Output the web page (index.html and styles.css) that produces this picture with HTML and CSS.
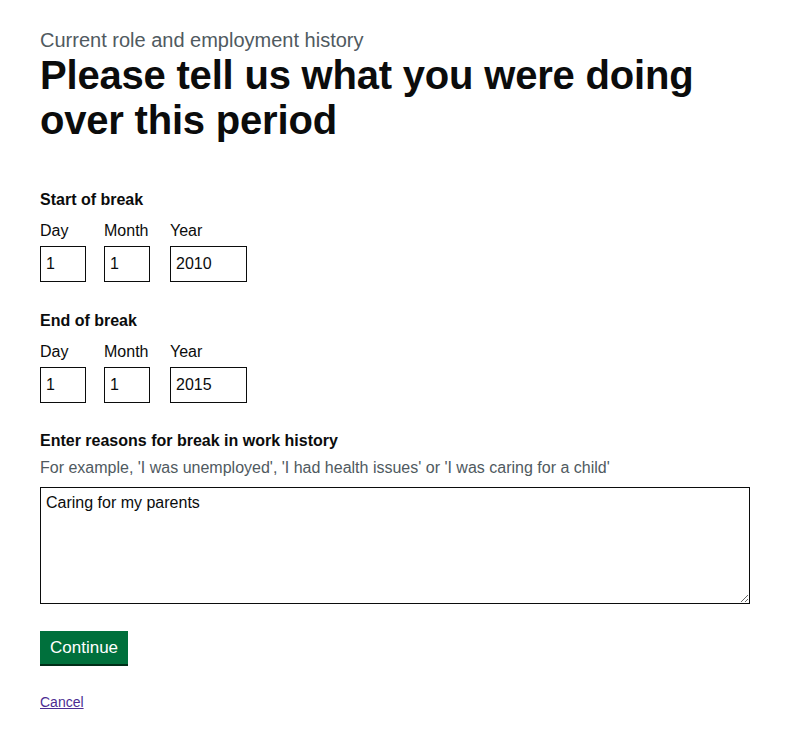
FILE: index.html
```html
<!DOCTYPE html>
<html lang="en">
<head>
<meta charset="utf-8">
<title>Please tell us what you were doing over this period</title>
<link rel="stylesheet" href="styles.css">
</head>
<body>
<main class="page">
  <span class="caption">Current role and employment history</span>
  <h1 class="heading">Please tell us what you were doing over this period</h1>

  <fieldset class="group date-group">
    <legend class="legend">Start of break</legend>
    <div class="date-input">
      <div class="date-item">
        <label class="date-label" for="s-day">Day</label>
        <input class="input w2" id="s-day" type="text" value="1">
      </div>
      <div class="date-item">
        <label class="date-label" for="s-month">Month</label>
        <input class="input w2" id="s-month" type="text" value="1">
      </div>
      <div class="date-item">
        <label class="date-label" for="s-year">Year</label>
        <input class="input w4" id="s-year" type="text" value="2010">
      </div>
    </div>
  </fieldset>

  <fieldset class="group date-group">
    <legend class="legend">End of break</legend>
    <div class="date-input">
      <div class="date-item">
        <label class="date-label" for="e-day">Day</label>
        <input class="input w2" id="e-day" type="text" value="1">
      </div>
      <div class="date-item">
        <label class="date-label" for="e-month">Month</label>
        <input class="input w2" id="e-month" type="text" value="1">
      </div>
      <div class="date-item">
        <label class="date-label" for="e-year">Year</label>
        <input class="input w4" id="e-year" type="text" value="2015">
      </div>
    </div>
  </fieldset>

  <div class="group text-group">
    <label class="legend" for="reasons">Enter reasons for break in work history</label>
    <div class="hint">For example, 'I was unemployed', 'I had health issues' or 'I was caring for a child'</div>
    <textarea class="textarea" id="reasons" rows="5">Caring for my parents</textarea>
  </div>

  <button class="button" type="submit">Continue</button>

  <a class="cancel" href="#">Cancel</a>
</main>
</body>
</html>
```

FILE: styles.css
```css
html, body {
  margin: 0;
  padding: 0;
  background: #ffffff;
}

body {
  font-family: "Liberation Sans", Arial, sans-serif;
  color: #0b0c0c;
}

.page {
  display: flex;
  flex-direction: column;
  align-items: flex-start;
  padding: 28px 40px 30px 40px;
  width: 710px;
}

.caption {
  display: block;
  font-size: 20px;
  line-height: 24px;
  color: #505a5f;
}

.heading {
  margin: 1px 0 0 0;
  font-size: 40px;
  line-height: 45px;
  font-weight: 700;
  letter-spacing: -0.2px;
  color: #0b0c0c;
}

.group {
  margin: 0;
  padding: 0;
  border: 0;
  min-width: 0;
}

.date-group {
  margin-top: 47px;
  display: flex;
  flex-direction: column;
}

.date-group + .date-group {
  margin-top: 29px;
}

.legend {
  display: block;
  padding: 0;
  font-size: 16px;
  line-height: 20px;
  font-weight: 700;
  color: #0b0c0c;
}

.date-input {
  display: flex;
  margin-top: 11px;
}

.date-item {
  display: flex;
  flex-direction: column;
  margin-right: 18px;
}

.date-item + .date-item {
  margin-right: 20px;
}

.date-label {
  font-size: 16px;
  line-height: 20px;
  margin-bottom: 5px;
}

.input {
  box-sizing: border-box;
  height: 36px;
  margin: 0;
  padding: 0 5px;
  border: 1px solid #0b0c0c;
  border-radius: 0;
  font-family: "Liberation Sans", Arial, sans-serif;
  font-size: 16px;
  color: #0b0c0c;
  background: #ffffff;
}

.w2 { width: 46px; }
.w4 { width: 77px; }

.text-group {
  margin-top: 28px;
  display: flex;
  flex-direction: column;
  width: 710px;
}

.hint {
  margin-top: 7px;
  font-size: 16px;
  line-height: 20px;
  color: #505a5f;
}

.textarea {
  box-sizing: border-box;
  display: block;
  width: 710px;
  height: 117px;
  margin-top: 9px;
  padding: 5px;
  border: 1px solid #0b0c0c;
  border-radius: 0;
  font-family: "Liberation Sans", Arial, sans-serif;
  font-size: 16px;
  line-height: 20px;
  color: #0b0c0c;
  resize: both;
}

.button {
  margin-top: 27px;
  box-sizing: border-box;
  height: 33px;
  padding: 0 10px;
  border: 0;
  border-radius: 0;
  background: #00703c;
  box-shadow: 0 2px 0 #002d18;
  color: #ffffff;
  font-family: "Liberation Sans", Arial, sans-serif;
  font-size: 17px;
  line-height: 33px;
  cursor: pointer;
}

.cancel {
  margin-top: 29px;
  font-size: 14px;
  line-height: 18px;
  color: #4c2c92;
  text-decoration: underline;
}
```
